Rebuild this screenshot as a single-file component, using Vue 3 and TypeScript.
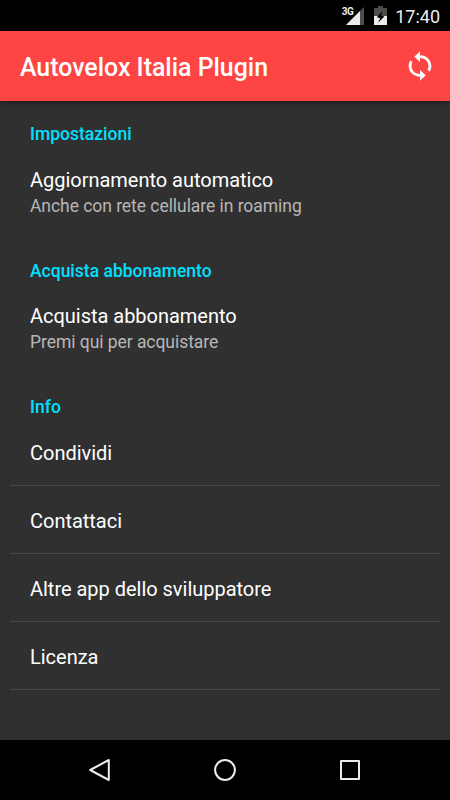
<script setup lang="ts">
interface Entry {
  title: string
  summary?: string
}

interface Section {
  heading: string
  divided?: boolean
  entries: Entry[]
}

const sections: Section[] = [
  {
    heading: 'Impostazioni',
    entries: [{ title: 'Aggiornamento automatico', summary: 'Anche con rete cellulare in roaming' }],
  },
  {
    heading: 'Acquista abbonamento',
    entries: [{ title: 'Acquista abbonamento', summary: 'Premi qui per acquistare' }],
  },
  {
    heading: 'Info',
    divided: true,
    entries: [
      { title: 'Condividi' },
      { title: 'Contattaci' },
      { title: 'Altre app dello sviluppatore' },
      { title: 'Licenza' },
    ],
  },
]
</script>

<template>
  <div class="screen">
    <div class="status-bar">
      <span class="network">3G</span>
      <svg class="signal" width="18" height="18" viewBox="0 0 18 18">
        <path d="M18 0V18H0Z" fill="#4d4d4d" />
        <path d="M14 4V18H0Z" fill="#ececec" />
      </svg>
      <svg class="battery" width="13" height="19" viewBox="0 0 13 19">
        <path d="M4 0h5v2h4v8H0V2h4z" fill="#4d4d4d" />
        <path d="M0 10h13v9H0z" fill="#ececec" />
        <path d="M8.6 5 2.8 11.2 6.2 12.2 4 16.8 10.4 10.6 7 9.6z" fill="#000" />
      </svg>
      <span class="clock">17:40</span>
    </div>

    <header class="app-bar">
      <h1>Autovelox Italia Plugin</h1>
      <button class="sync" aria-label="Aggiorna">
        <svg width="34" height="32" viewBox="0 0 24 24" preserveAspectRatio="none">
          <path
            fill="#fff"
            d="M12 4V1L8 5l4 4V6c3.31 0 6 2.69 6 6 0 1.01-.25 1.97-.7 2.8l1.46 1.46C19.54 15.03 20 13.57 20 12c0-4.42-3.58-8-8-8zm0 14c-3.31 0-6-2.69-6-6 0-1.01.25-1.97.7-2.8L5.24 7.74C4.46 8.97 4 10.43 4 12c0 4.42 3.58 8 8 8v3l4-4-4-4v3z"
          />
        </svg>
      </button>
    </header>

    <main class="content">
      <section v-for="section in sections" :key="section.heading" :class="{ divided: section.divided }">
        <h2>{{ section.heading }}</h2>
        <div v-for="entry in section.entries" :key="entry.title" class="entry">
          <div class="title">{{ entry.title }}</div>
          <div v-if="entry.summary" class="summary">{{ entry.summary }}</div>
        </div>
      </section>
    </main>

    <nav class="nav-bar">
      <svg width="26" height="26" viewBox="0 0 26 26">
        <path d="M21.8 3V23L3.2 13Z" />
      </svg>
      <svg width="26" height="26" viewBox="0 0 26 26">
        <circle cx="13" cy="13" r="9.9" />
      </svg>
      <svg width="26" height="26" viewBox="0 0 26 26">
        <rect x="4" y="4" width="18" height="18" />
      </svg>
    </nav>
  </div>
</template>

<style>
body {
  margin: 0;
  background: #303030;
}
</style>

<style scoped>
.screen {
  display: flex;
  flex-direction: column;
  width: 450px;
  height: 800px;
  overflow: hidden;
  background: #303030;
  color: #fff;
  font-family: Roboto, sans-serif;
}

.status-bar {
  display: flex;
  flex: none;
  box-sizing: border-box;
  height: 31px;
  padding: 7px 10px 0 0;
  justify-content: flex-end;
  align-items: flex-start;
  background: #000;
  color: #ececec;
}

.network {
  margin-right: -7px;
  font-size: 10px;
  font-weight: 700;
  line-height: 10px;
  letter-spacing: -0.6px;
  z-index: 1;
}

.battery {
  margin: -1px 8px 0 10px;
}

.clock {
  font-size: 18px;
  line-height: 20px;
}

.app-bar {
  display: flex;
  flex: none;
  box-sizing: border-box;
  height: 70px;
  padding: 0 13px 0 20px;
  align-items: center;
  justify-content: space-between;
  background: #ff4444;
  box-shadow: 0 2px 6px rgba(0, 0, 0, 0.45);
}

h1 {
  margin: 0;
  padding-top: 3px;
  font-size: 24.9px;
  font-weight: 500;
  line-height: 30px;
  white-space: nowrap;
}

.sync {
  display: flex;
  margin: 0;
  padding: 0;
  border: 0;
  background: none;
}

.content {
  flex: 1;
  padding: 13px 10px 0;
}

h2 {
  box-sizing: border-box;
  margin: 0;
  padding: 9px 20px 0;
  height: 40px;
  color: #00e0ff;
  font-size: 17.5px;
  font-weight: 500;
  line-height: 22px;
}

section + section h2 {
  padding-top: 10px;
}

.entry {
  box-sizing: border-box;
  height: 96px;
  padding: 14px 20px 0;
}

.title {
  font-size: 20px;
  line-height: 24px;
  letter-spacing: -0.02px;
}

.summary {
  padding-top: 3px;
  color: #b7b7b7;
  font-size: 17.5px;
  line-height: 22px;
  letter-spacing: -0.05px;
}

.divided .entry {
  height: 68px;
  padding-top: 23px;
  border-bottom: 1px solid #484848;
}

.divided .entry:first-of-type {
  height: 60px;
  padding-top: 15px;
}

.nav-bar {
  display: flex;
  flex: none;
  height: 60px;
  padding: 0 87px;
  align-items: center;
  justify-content: space-between;
  background: #000;
}

.nav-bar path,
.nav-bar circle,
.nav-bar rect {
  fill: none;
  stroke: #ececec;
  stroke-width: 2;
  stroke-linejoin: round;
}
</style>
